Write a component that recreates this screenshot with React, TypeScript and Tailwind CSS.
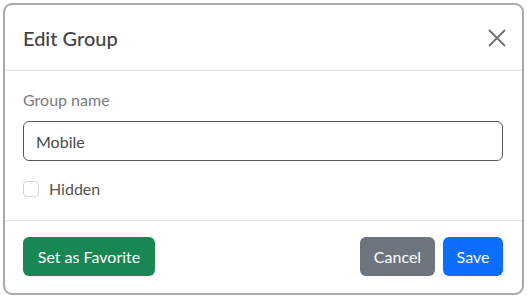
import { useState } from "react";

const App = () => {
    const [name, setName] = useState("Mobile");
    const [hidden, setHidden] = useState(false);

    return (
        <div
            className="w-[527px] h-[298px] bg-white p-[3px]"
            style={{ fontFamily: "Lato, 'Noto Sans', sans-serif" }}
        >
            <div className="w-[521px] h-[292px] border-2 border-[#a9a9a9] rounded-[9px] flex flex-col bg-white">
                <div className="h-[66px] flex items-center justify-between pl-[18px] pr-[13px] border-b border-[#dee2e6]">
                    <h1 className="text-[20px] font-medium text-[#444]">Edit Group</h1>
                    <button className="w-[24px] h-[24px] flex items-center justify-center text-[#6f6f6f]">
                        <svg width="18" height="18" viewBox="0 0 18 18" fill="none" stroke="currentColor" strokeWidth="1.8">
                            <path d="M1 1L17 17M17 1L1 17" />
                        </svg>
                    </button>
                </div>

                <div className="h-[150px] pl-[18px] pr-[19px] pt-[18px] border-b border-[#dee2e6] flex flex-col">
                    <label htmlFor="name" className="text-[16px] text-[#7a7a7a] leading-[22px]">
                        Group name
                    </label>
                    <input
                        id="name"
                        value={name}
                        onChange={(e) => setName(e.target.value)}
                        className="mt-[10px] h-[40px] w-full border border-[#555] rounded-[6px] px-[12px] text-[16px] text-[#4a4a4a] outline-none"
                    />
                    <label className="mt-[16px] flex items-center gap-[10px] text-[16px] text-[#555]">
                        <input
                            type="checkbox"
                            checked={hidden}
                            onChange={(e) => setHidden(e.target.checked)}
                            className="appearance-none w-[16px] h-[16px] border border-[#d6d6d6] rounded-[4px] bg-white"
                        />
                        Hidden
                    </label>
                </div>

                <div className="flex-1 flex items-center justify-between pl-[18px] pr-[19px] pb-[1px]">
                    <button className="h-[39px] w-[132px] rounded-[6px] bg-[#198754] text-white text-[16px]">
                        Set as Favorite
                    </button>
                    <div className="flex gap-[8px]">
                        <button className="h-[39px] w-[75px] rounded-[6px] bg-[#6c757d] text-white text-[16px]">
                            Cancel
                        </button>
                        <button className="h-[39px] w-[60px] rounded-[6px] bg-[#0d6efd] text-white text-[16px]">
                            Save
                        </button>
                    </div>
                </div>
            </div>
        </div>
    );
};

export default App;
